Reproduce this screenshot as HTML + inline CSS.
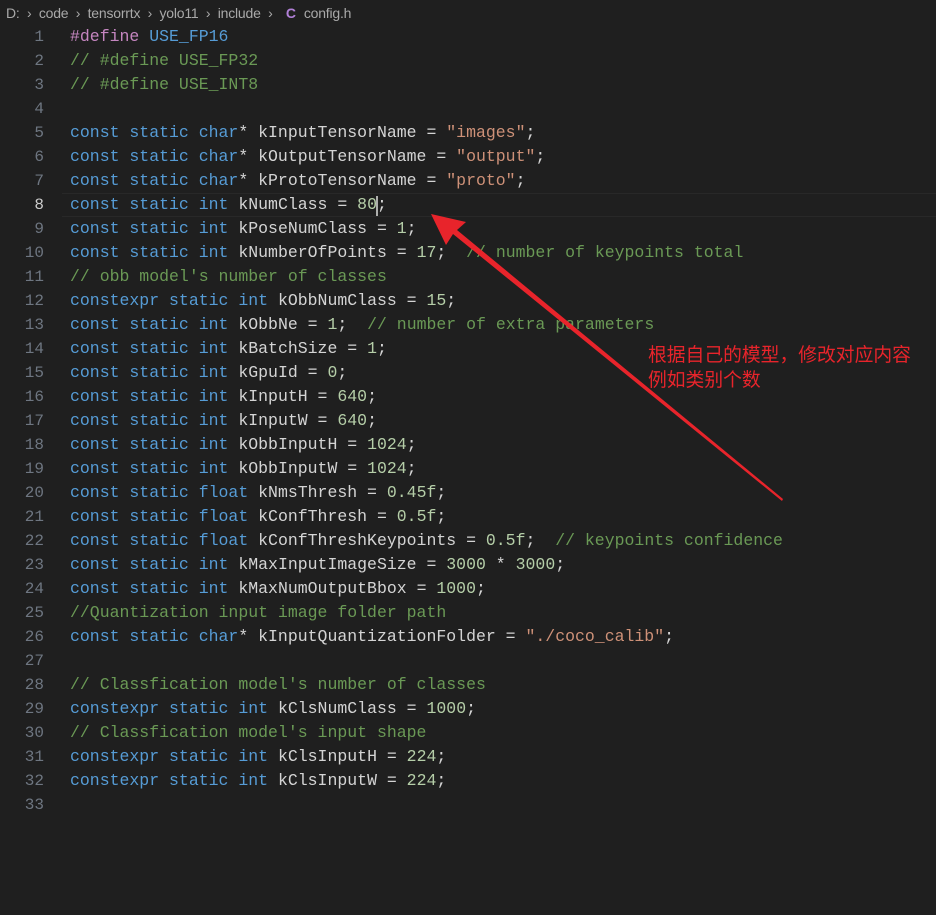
<!DOCTYPE html>
<html><head><meta charset="utf-8"><style>
body{margin:0;width:936px;height:915px;background:#1f1f1f;overflow:hidden;position:relative;font-family:"Liberation Mono",monospace}
.bc{position:absolute;left:6px;top:5px;font:14px "Liberation Sans",sans-serif;letter-spacing:-0.2px;color:#a9a9a9;white-space:pre}
.bc b{color:#b180d7;font-weight:bold;margin:0 8px 0 6px}
.ln{position:absolute;left:0;width:44px;text-align:right;color:#6e7681;font-size:16px;line-height:24px}
.code{position:absolute;left:70px;font-size:16.5px;line-height:24px;color:#d4d4d4;white-space:pre}
.k{color:#569cd6}.p{color:#c586c0}.c{color:#6a9955}.s{color:#ce9178}.n{color:#b5cea8}
.cur{position:absolute;left:62px;right:0;top:193px;height:22px;border-top:1px solid #282828;border-bottom:1px solid #282828}
.note{position:absolute;left:648px;top:342px;color:#e8242b;font:18.8px "Liberation Sans","Noto Sans CJK SC",sans-serif;line-height:25px;white-space:nowrap}
</style></head><body>
<div class="bc">D:  ›  code  ›  tensorrtx  ›  yolo11  ›  include  ›  <b>C</b>config.h</div>
<div class="cur"></div>
<div class="ln" style="top:25px">1<br>2<br>3<br>4<br>5<br>6<br>7<br><span style="color:#ccc">8</span><br>9<br>10<br>11<br>12<br>13<br>14<br>15<br>16<br>17<br>18<br>19<br>20<br>21<br>22<br>23<br>24<br>25<br>26<br>27<br>28<br>29<br>30<br>31<br>32<br>33</div>
<div class="code" style="top:25px"><span class="p">#define</span> <span class="k">USE_FP16</span>
<span class="c">// #define USE_FP32</span>
<span class="c">// #define USE_INT8</span>

<span class="k">const static char</span>* kInputTensorName = <span class="s">"images"</span>;
<span class="k">const static char</span>* kOutputTensorName = <span class="s">"output"</span>;
<span class="k">const static char</span>* kProtoTensorName = <span class="s">"proto"</span>;
<span class="k">const static int</span> kNumClass = <span class="n">80</span>;
<span class="k">const static int</span> kPoseNumClass = <span class="n">1</span>;
<span class="k">const static int</span> kNumberOfPoints = <span class="n">17</span>;  <span class="c">// number of keypoints total</span>
<span class="c">// obb model's number of classes</span>
<span class="k">constexpr static int</span> kObbNumClass = <span class="n">15</span>;
<span class="k">const static int</span> kObbNe = <span class="n">1</span>;  <span class="c">// number of extra parameters</span>
<span class="k">const static int</span> kBatchSize = <span class="n">1</span>;
<span class="k">const static int</span> kGpuId = <span class="n">0</span>;
<span class="k">const static int</span> kInputH = <span class="n">640</span>;
<span class="k">const static int</span> kInputW = <span class="n">640</span>;
<span class="k">const static int</span> kObbInputH = <span class="n">1024</span>;
<span class="k">const static int</span> kObbInputW = <span class="n">1024</span>;
<span class="k">const static float</span> kNmsThresh = <span class="n">0.45f</span>;
<span class="k">const static float</span> kConfThresh = <span class="n">0.5f</span>;
<span class="k">const static float</span> kConfThreshKeypoints = <span class="n">0.5f</span>;  <span class="c">// keypoints confidence</span>
<span class="k">const static int</span> kMaxInputImageSize = <span class="n">3000</span> * <span class="n">3000</span>;
<span class="k">const static int</span> kMaxNumOutputBbox = <span class="n">1000</span>;
<span class="c">//Quantization input image folder path</span>
<span class="k">const static char</span>* kInputQuantizationFolder = <span class="s">"./coco_calib"</span>;

<span class="c">// Classfication model's number of classes</span>
<span class="k">constexpr static int</span> kClsNumClass = <span class="n">1000</span>;
<span class="c">// Classfication model's input shape</span>
<span class="k">constexpr static int</span> kClsInputH = <span class="n">224</span>;
<span class="k">constexpr static int</span> kClsInputW = <span class="n">224</span>;
</div>
<div style="position:absolute;left:376px;top:196px;width:2px;height:20px;background:#aeafad"></div>
<div class="note">根据自己的模型，修改对应内容<br>例如类别个数</div>
<svg style="position:absolute;left:0;top:0" width="936" height="915">
<polygon points="431,214 466,222 457,230 783,499 782,501 453,234 446,245" fill="#e8242b"/>
</svg>
</body></html>
